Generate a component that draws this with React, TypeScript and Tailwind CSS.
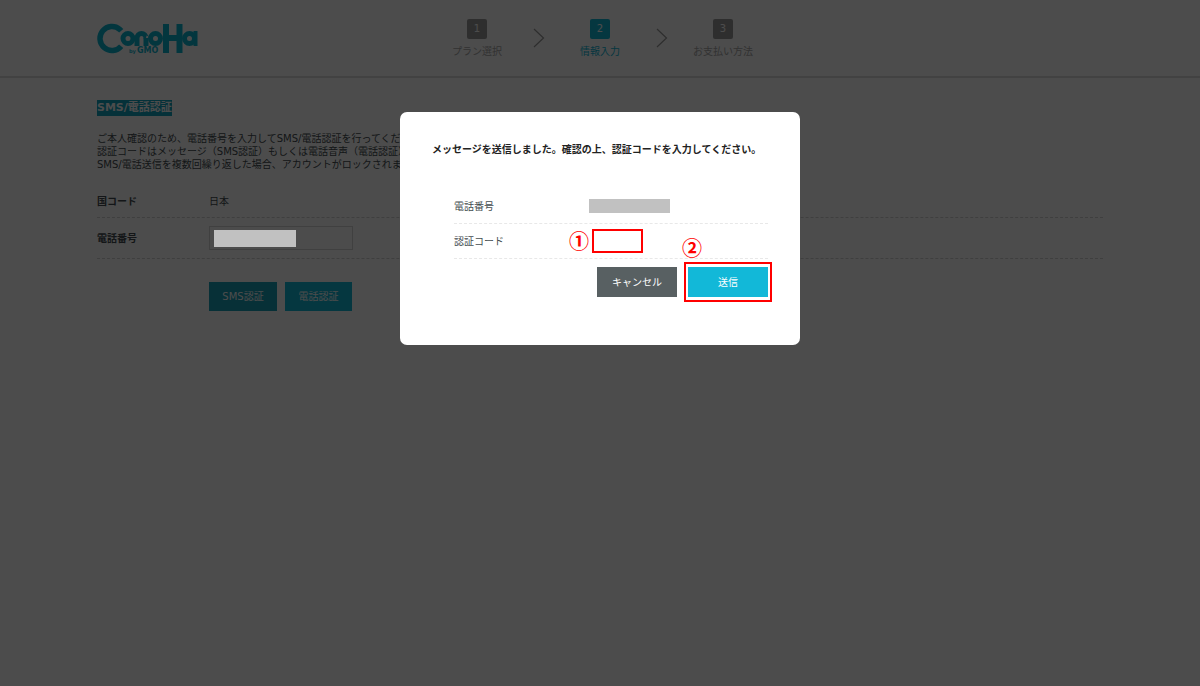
import { useState } from 'react';
import type { ReactNode } from 'react';
import clsx from 'clsx';

const STEPS = [
  { id: 1, title: 'プラン選択' },
  { id: 2, title: '情報入力' },
  { id: 3, title: 'お支払い方法' },
];

const CURRENT_STEP = 2;

export default function App() {
  const [phone, setPhone] = useState('');

  return (
    <div className="min-h-screen bg-white font-['DejaVu_Sans','Noto_Sans_CJK_JP',sans-serif] text-[10px] leading-[13px] text-[#444c50]">
      <header className="border-b-2 border-[#dcdcdc]">
        <div className="mx-auto grid h-[76px] max-w-[1006px] grid-cols-[1fr_auto_1fr] items-center">
          <a href="#" className="w-fit">
            <Logo />
          </a>
          <StepNav />
        </div>
      </header>

      <main className="mx-auto max-w-[1006px] pt-[22px]">
        <h1 className="w-fit bg-[#12a5c0] text-[11px] leading-4 font-bold text-white">SMS/電話認証</h1>
        <p className="mt-4">
          ご本人確認のため、電話番号を入力してSMS/電話認証を行ってください。
          <br />
          認証コードはメッセージ（SMS認証）もしくは電話音声（電話認証）より
          <br />
          SMS/電話送信を複数回繰り返した場合、アカウントがロックされます。
        </p>

        <form className="mt-[15px]" onSubmit={(e) => e.preventDefault()}>
          <div className="flex h-8 items-center border-b border-dashed border-[#d4d4d4]">
            <span className="w-28 font-bold">国コード</span>
            <span>日本</span>
          </div>
          <div className="flex h-[41px] items-center border-b border-dashed border-[#d4d4d4]">
            <label htmlFor="phone" className="w-28 font-bold">電話番号</label>
            <div className="relative">
              <input
                id="phone"
                type="tel"
                value={phone}
                onChange={(e) => setPhone(e.target.value)}
                className="block h-6 w-36 border border-[#d8d8d8] px-1"
              />
              <span className="absolute top-1 left-[5px] z-20 h-[17px] w-[82px] bg-[#c1c1c1]" />
            </div>
          </div>
          <div className="mt-[23px] ml-28 flex gap-2">
            <button type="button" className="h-[29px] w-[68px] bg-[#18a0b8] text-white">SMS認証</button>
            <button type="button" className="h-[29px] w-[67px] bg-[#12b8d8] text-white">電話認証</button>
          </div>
        </form>
      </main>

      <CodeDialog />
    </div>
  );
}

function StepNav() {
  return (
    <ol className="flex items-center">
      {STEPS.map((step) => (
        <li key={step.id} className="flex items-center">
          {step.id > 1 && (
            <svg viewBox="0 0 12 20" className="mx-6 h-5 w-3" fill="none" stroke="#999" strokeWidth="1.2">
              <path d="M1 1l9.500 9L1 19" />
            </svg>
          )}
          <div className="flex w-[63px] flex-col items-center gap-[6px]">
            <span
              className={clsx(
                'flex h-5 w-5 items-center justify-center rounded-[2px] text-white',
                step.id === CURRENT_STEP ? 'bg-[#12b8d8]' : 'bg-[#9c9c9c]',
              )}
            >
              {step.id}
            </span>
            <span
              className={clsx(
                'whitespace-nowrap',
                step.id === CURRENT_STEP ? 'text-[#12b8d8]' : 'text-[#a8a8a8]',
              )}
            >
              {step.title}
            </span>
          </div>
        </li>
      ))}
    </ol>
  );
}

function CodeDialog() {
  const [code, setCode] = useState('');

  return (
    <div className="fixed inset-0 z-10 flex items-start justify-center bg-black/70 pt-28">
      <div
        role="dialog"
        aria-modal="true"
        aria-labelledby="dialog-title"
        className="w-full max-w-[400px] rounded-[7px] bg-white px-8 pt-[31px] pb-[43px]"
      >
        <h2 id="dialog-title" className="font-bold whitespace-nowrap text-[#222]">
          メッセージを送信しました。確認の上、認証コードを入力してください。
        </h2>
        <form className="mt-[33px] pl-[22px]" onSubmit={(e) => e.preventDefault()}>
          <div className="flex h-[35px] items-center border-b border-dashed border-[#e8e8e8]">
            <span className="w-[135px]">電話番号</span>
            <span className="h-[14px] w-[81px] bg-[#c1c1c1]" />
          </div>
          <div className="flex h-[35px] items-center border-b border-dashed border-[#e8e8e8]">
            <label htmlFor="code" className="w-[138px]">認証コード</label>
            <div className="relative">
              <input
                id="code"
                type="text"
                value={code}
                onChange={(e) => setCode(e.target.value)}
                className="block h-6 w-[51px] border-2 border-[#f00] px-1"
              />
              <Marker className="top-[2px] -left-[23px]">①</Marker>
            </div>
          </div>
          <div className="mt-[3px] -mr-1 flex items-center justify-end gap-[7px]">
            <button type="button" className="h-[30px] w-20 bg-[#586062] text-white">キャンセル</button>
            <div className="relative border-2 border-[#f00] px-[2px] py-[3px]">
              <button type="submit" className="block h-[30px] w-20 bg-[#12b8d8] text-white">送信</button>
              <Marker className="-top-[26px] -left-1">②</Marker>
            </div>
          </div>
        </form>
      </div>
    </div>
  );
}

function Marker({ className, children }: { className: string; children: ReactNode }) {
  return (
    <span className={clsx("absolute font-['Noto_Sans_CJK_JP',sans-serif] text-[20px] leading-5 font-bold text-[#f00]", className)}>
      {children}
    </span>
  );
}

function Logo() {
  return (
    <svg viewBox="0 0 101 31" className="h-[31px] w-[101px]" fill="none" stroke="#0db4d0" strokeWidth="5" role="img" aria-label="ConoHa by GMO">
      {/* C: ring left open on the right */}
      <circle cx="15" cy="15.500" r="12" strokeWidth="5.500" pathLength="100" strokeDasharray="78 22" transform="rotate(40 15 15.500)" />
      <circle cx="31" cy="15.500" r="5" />
      {/* n: half ring on two stems */}
      <circle cx="44.500" cy="15" r="4.500" pathLength="100" strokeDasharray="50 50" transform="rotate(180 44.500 15)" />
      <line x1="40" y1="15" x2="40" y2="23" />
      <line x1="49" y1="15" x2="49" y2="23" />
      <circle cx="58.500" cy="15.500" r="5" />
      {/* H */}
      <line x1="69" y1="1" x2="69" y2="30" strokeWidth="6" />
      <line x1="82.500" y1="1" x2="82.500" y2="30" strokeWidth="6" />
      <line x1="69" y1="15" x2="82" y2="15" strokeWidth="6" />
      {/* a */}
      <circle cx="92.500" cy="15.500" r="5" />
      <line x1="98.500" y1="8" x2="98.500" y2="23" strokeWidth="4" />
      <text x="32" y="30" fill="#0db4d0" stroke="none" fontSize="5" fontWeight="700">by</text>
      <text x="40" y="30" fill="#0db4d0" stroke="none" fontSize="8" fontWeight="700">GMO</text>
    </svg>
  );
}
